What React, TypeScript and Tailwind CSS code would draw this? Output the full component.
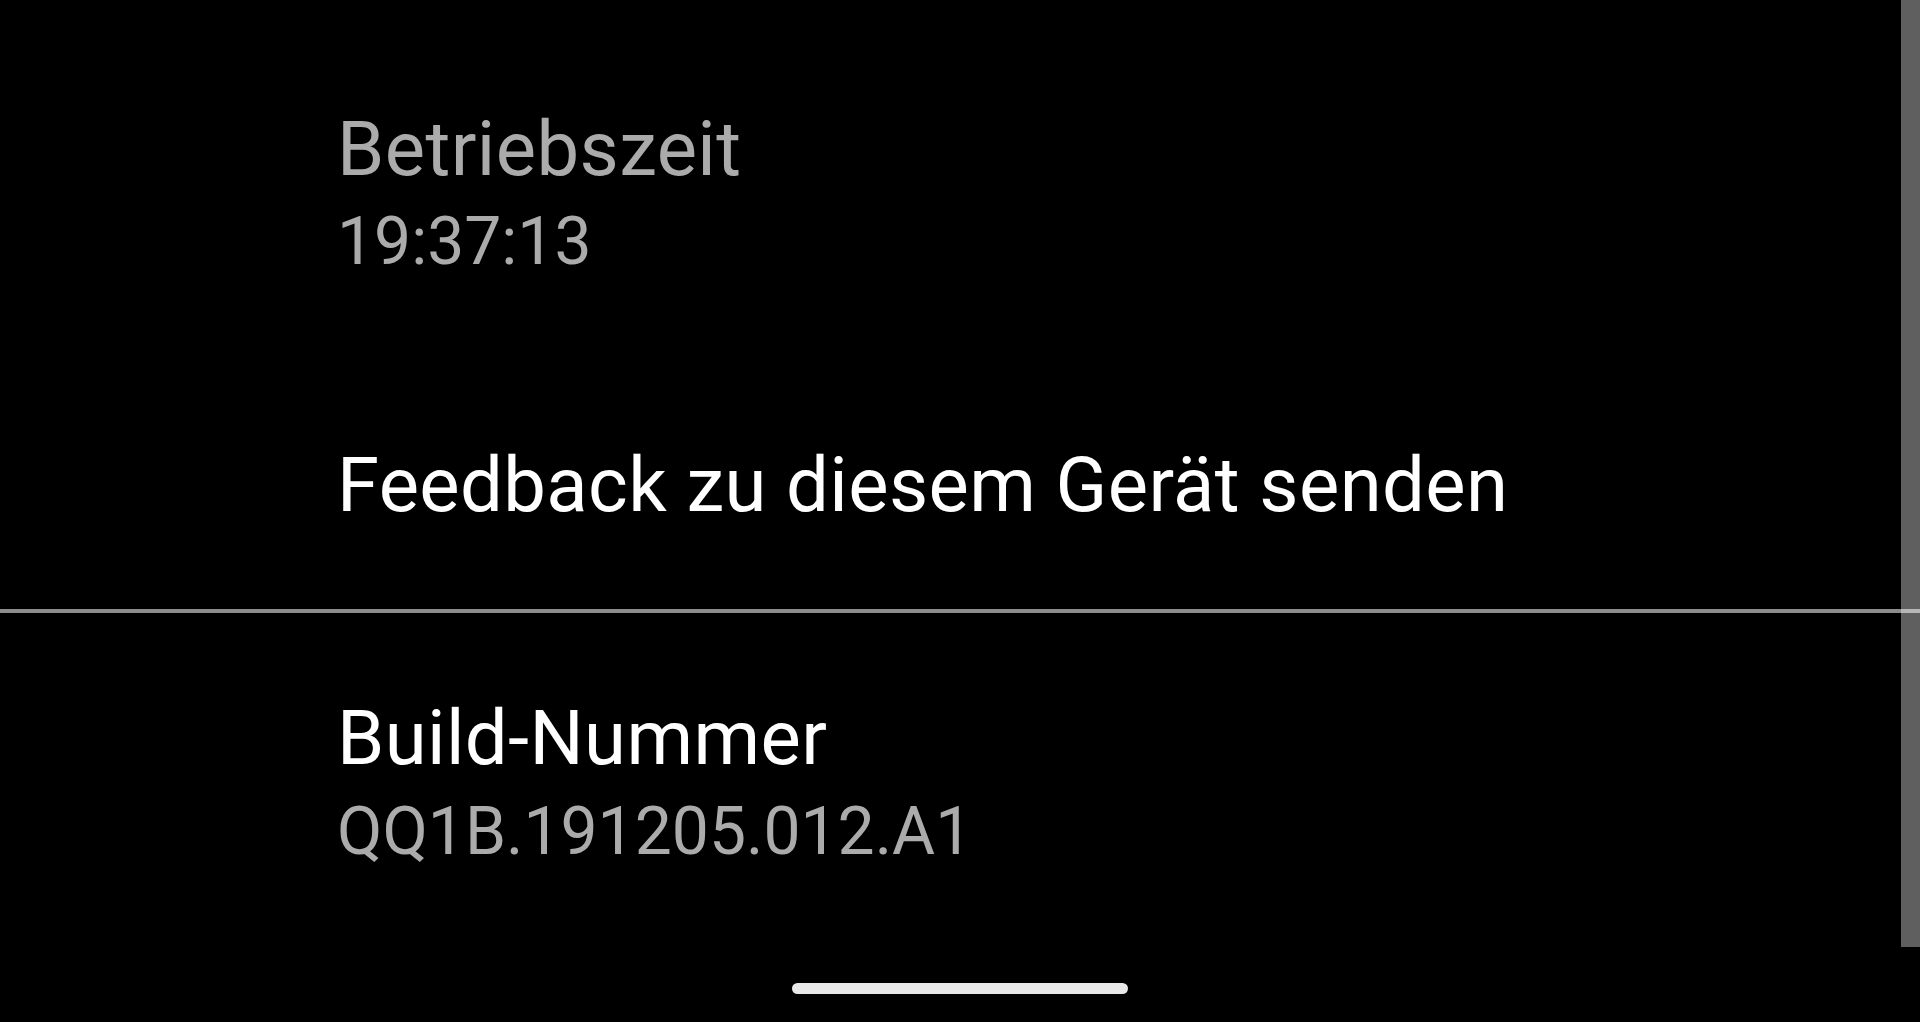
import React from "react"

const font = { fontFamily: "Roboto, 'Liberation Sans', sans-serif" }

const App = () => {
  return (
    <div className="relative h-[1022px] w-full overflow-hidden bg-black" style={font}>
      {/* scroll indicator */}
      <div className="absolute right-0 top-0 h-[947px] w-[19px] bg-[#5f5f5f]" />

      <div className="flex flex-col">
        <div className="flex flex-col pl-[337px] pt-[104px]">
          <div className="text-[76px] leading-[90px] tracking-[0.4px] text-[#ababab]">Betriebszeit</div>
          <div className="mt-[3px] text-[66px] leading-[90px] text-[#ababab]">19:37:13</div>
        </div>

        <div className="mt-[153px] pl-[337px] text-[76px] leading-[90px] tracking-[0.4px] text-white">
          Feedback zu diesem Gerät senden
        </div>

        <div className="relative z-10 mt-[79px] h-[4px] w-full bg-white/55" />

        <div className="flex flex-col pl-[337px] pt-[80px]">
          <div className="text-[76px] leading-[90px] tracking-[0.4px] text-white">Build-Nummer</div>
          <div className="mt-[4px] text-[66px] leading-[90px] text-[#ababab]">QQ1B.191205.012.A1</div>
        </div>
      </div>

      {/* gesture bar */}
      <div className="absolute bottom-[28px] left-[792px] h-[11px] w-[336px] rounded-full bg-[#e8e8e8]" />
    </div>
  )
}

export default App
